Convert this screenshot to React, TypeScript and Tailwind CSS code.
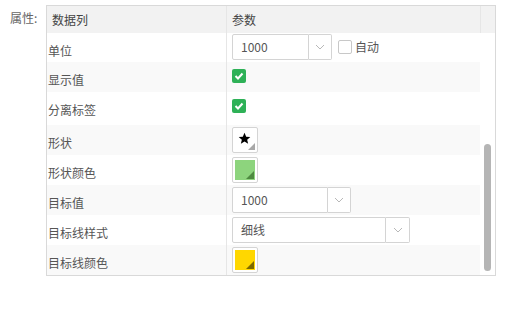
import React from 'react'

const cn = "font-['Noto_Sans_CJK_SC','Noto_Sans',sans-serif]"

const Chevron = () => (
  <svg width="10" height="6" viewBox="0 0 10 6" fill="none" stroke="#b8b8b8" strokeWidth="1">
    <path d="M1 1l4 4 4-4" />
  </svg>
)

const Combo: React.FC<{ value: string; width: number; inputWidth: number }> = ({ value, width, inputWidth }) => (
  <div className="flex h-[26px] rounded-[2px] bg-white" style={{ width }}>
    <div
      className="flex h-full items-center rounded-l-[2px] border border-[#d4d4d4] pl-[8px] text-[12px] text-[#555]"
      style={{ width: inputWidth }}
    >
      {value}
    </div>
    <div className="flex h-full flex-1 items-center justify-center rounded-r-[2px] border border-l-0 border-[#d4d4d4]">
      <Chevron />
    </div>
  </div>
)

const Check = () => (
  <div className="flex h-[14px] w-[14px] items-center justify-center rounded-[2px] bg-[#2eb157]">
    <svg width="10" height="8" viewBox="0 0 10 8" fill="none" stroke="white" strokeWidth="2">
      <path d="M1.5 4l2.5 2.5L8.5 1.5" />
    </svg>
  </div>
)

const Swatch: React.FC<{ color: string; corner: string }> = ({ color, corner }) => (
  <div className="relative h-[26px] w-[26px] rounded-[2px] border border-[#d4d4d4] bg-white p-[2px]">
    <div className="h-full w-full" style={{ background: color }} />
    <svg className="absolute bottom-[3px] right-[3px]" width="8" height="8" viewBox="0 0 8 8">
      <path d="M8 0V8H0Z" fill={corner} />
    </svg>
  </div>
)

const ShapeBtn = () => (
  <div className="relative h-[26px] w-[26px] rounded-[2px] border border-[#d4d4d4] bg-white">
    <svg className="absolute left-[5px] top-[4px]" width="13" height="13" viewBox="0 0 24 24">
      <path d="M12 1.5l3.1 7.1 7.6.6-5.8 5 1.8 7.5L12 17.7l-6.7 4 1.8-7.5-5.8-5 7.6-.6z" fill="#000" />
    </svg>
    <svg className="absolute bottom-[2px] right-[2px]" width="7" height="7" viewBox="0 0 7 7">
      <path d="M7 0V7H0Z" fill="#a8a8a8" />
    </svg>
  </div>
)

type Row = { label: string; h: number; mt: number; el: React.ReactNode }

const rows: Row[] = [
  {
    label: '单位',
    h: 29,
    mt: 1,
    el: (
      <div className="flex items-center">
        <Combo value="1000" width={100} inputWidth={77} />
        <div className="ml-[6px] h-[14px] w-[14px] rounded-[2px] border border-[#c8c8c8] bg-white" />
        <span className="ml-[3px] text-[12px] text-[#555]">自动</span>
      </div>
    ),
  },
  { label: '显示值', h: 30, mt: 7, el: <Check /> },
  { label: '分离标签', h: 33, mt: 7, el: <Check /> },
  { label: '形状', h: 30, mt: 2, el: <ShapeBtn /> },
  { label: '形状颜色', h: 30, mt: 2, el: <Swatch color="#8dd47d" corner="#4e8a40" /> },
  { label: '目标值', h: 30, mt: 2, el: <Combo value="1000" width={119} inputWidth={96} /> },
  { label: '目标线样式', h: 30, mt: 2, el: <Combo value="细线" width={178} inputWidth={154} /> },
  { label: '目标线颜色', h: 30, mt: 2, el: <Swatch color="#ffd700" corner="#7d6a00" /> },
]

export default function App() {
  return (
    <div className={`flex h-[310px] w-[515px] bg-white ${cn}`}>
      <div className="w-[46px] pl-[10px] pt-[10px] text-[12px] leading-[16px] text-[#666]">属性:</div>
      <div className="mt-[5px] flex h-[271px] w-[450px] flex-col border border-[#d9d9d9]">
        <div className="flex h-[27px] bg-[#f2f2f2] text-[12px] text-[#444]">
          <div className="flex w-[180px] items-center border-r border-[#e6e6e6] pl-[5px]">数据列</div>
          <div className="flex flex-1 items-center pl-[5px]">参数</div>
          <div className="w-[15px] border-l border-[#e6e6e6]" />
        </div>
        <div className="flex flex-1">
          <div className="flex flex-1 flex-col">
            {rows.map((r, i) => (
              <div
                key={r.label}
                className={`flex ${i % 2 === 1 ? 'bg-[#f9f9f9]' : 'bg-white'}`}
                style={{ height: r.h }}
              >
                <div className="w-[180px] border-r border-[#e6e6e6] pl-[1px] pt-[10px] text-[12px] leading-[16px] text-[#555]">
                  {r.label}
                </div>
                <div className="flex-1 pl-[5px]" style={{ paddingTop: r.mt }}>
                  {r.el}
                </div>
              </div>
            ))}
          </div>
          <div className="w-[15px] pl-[4px] pt-[111px]">
            <div className="h-[127px] w-[7px] rounded-full bg-[#b5b5b5]" />
          </div>
        </div>
      </div>
    </div>
  )
}
